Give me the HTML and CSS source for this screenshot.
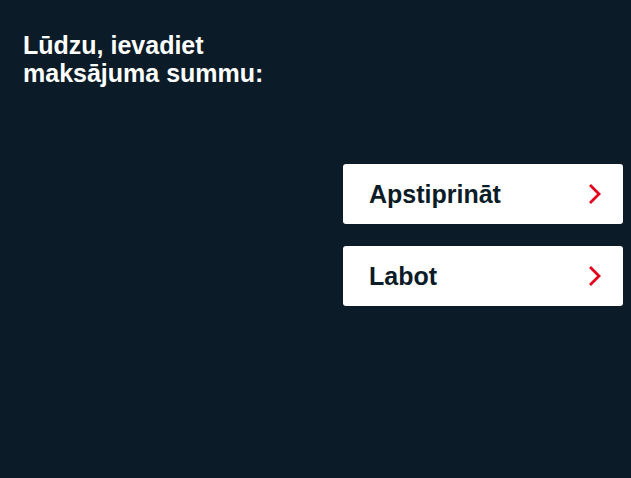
FILE: index.html
```html
<!DOCTYPE html>
<html lang="lv">
<head>
<meta charset="utf-8">
<link rel="stylesheet" href="styles.css">
</head>
<body>
<main class="screen">
  <h1 class="prompt">Lūdzu, ievadiet<br>maksājuma summu:</h1>
  <div class="actions">
    <button class="action">
      <span class="label">Apstiprināt</span>
      <svg class="chev" width="14" height="22" viewBox="0 0 14 22"><path d="M2 2 L11 11 L2 20" fill="none" stroke="#e3001b" stroke-width="2.8"/></svg>
    </button>
    <button class="action">
      <span class="label">Labot</span>
      <svg class="chev" width="14" height="22" viewBox="0 0 14 22"><path d="M2 2 L11 11 L2 20" fill="none" stroke="#e3001b" stroke-width="2.8"/></svg>
    </button>
  </div>
</main>
</body>
</html>
```
FILE: styles.css
```css
html, body {
  margin: 0;
  padding: 0;
  background: #0b1c28;
  width: 631px;
  height: 478px;
  overflow: hidden;
}
.screen {
  display: flex;
  flex-direction: column;
  padding: 31px 8px 0 23px;
  font-family: "Liberation Sans", Arial, sans-serif;
}
.prompt {
  margin: 0;
  color: #ffffff;
  font-size: 25px;
  line-height: 28px;
  font-weight: 700;
}
.actions {
  align-self: flex-end;
  width: 280px;
  margin-top: 77px;
  display: flex;
  flex-direction: column;
  gap: 22px;
}
.action {
  display: flex;
  align-items: center;
  justify-content: space-between;
  height: 60px;
  padding: 0 21px 0 26px;
  background: #ffffff;
  border: none;
  border-radius: 3px;
  font-family: inherit;
  cursor: pointer;
}
.label {
  color: #0b1c28;
  font-size: 25px;
  font-weight: 700;
  line-height: 28px;
}
.chev { display: block; }
```
